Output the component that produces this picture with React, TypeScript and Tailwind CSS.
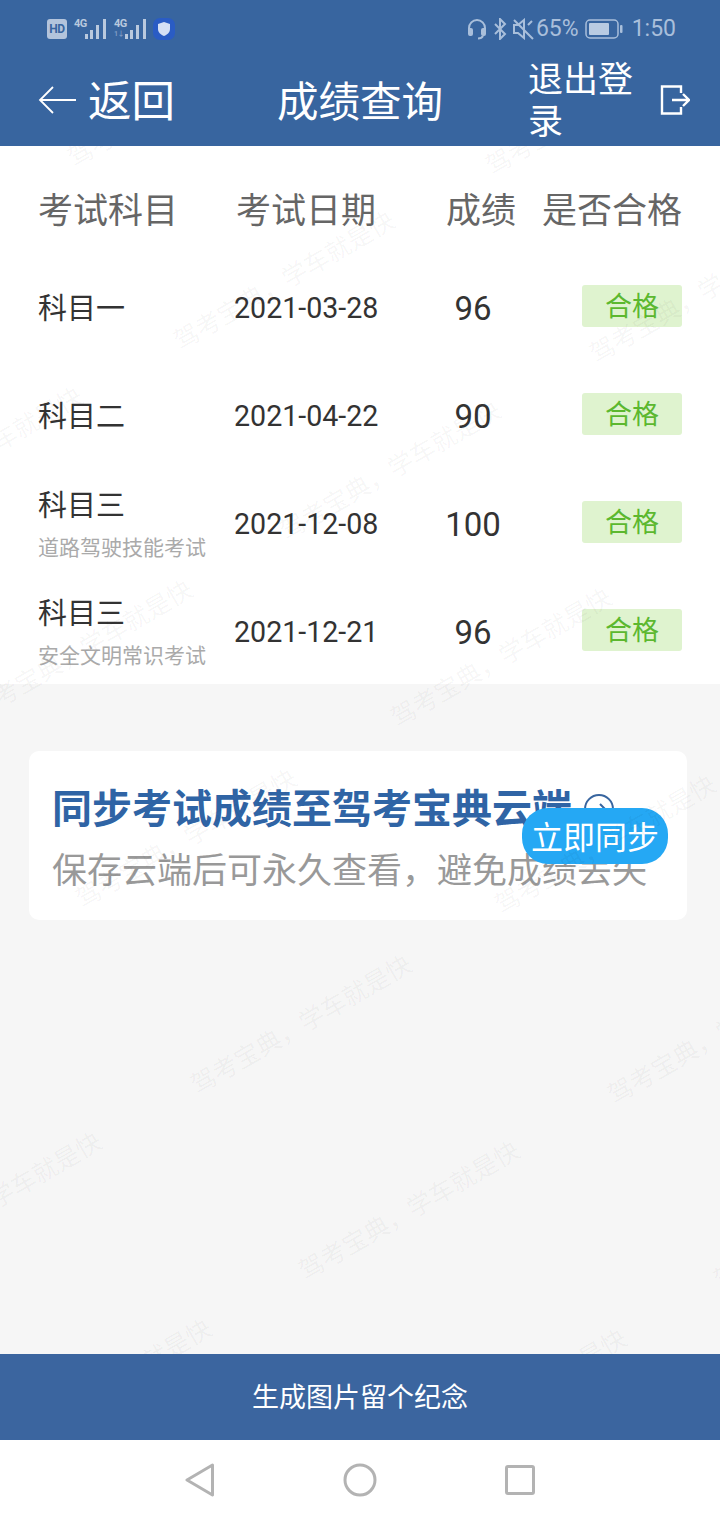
import React from "react";

const CJK = "font-['Roboto','Noto_Sans_CJK_SC',sans-serif]";

const rows = [
  { name: "科目一", date: "2021-03-28", score: "96" },
  { name: "科目二", date: "2021-04-22", score: "90" },
  { name: "科目三", sub: "道路驾驶技能考试", date: "2021-12-08", score: "100" },
  { name: "科目三", sub: "安全文明常识考试", date: "2021-12-21", score: "96" },
];

// start point of each watermark, in page coordinates
const marks = [
  [70, 160], [488, 168],
  [176, 343], [592, 356],
  [-136, 519], [282, 533],
  [-26, 712], [393, 720],
  [78, 901], [497, 907],
  [193, 1087], [610, 1097],
  [-117, 1264], [301, 1273], [716, 1282],
  [-7, 1451], [408, 1461],
];

function Signal() {
  return (
    <svg width="21" height="20" viewBox="0 0 21 20" fill="#b9c9de">
      <rect x="0" y="15" width="3" height="5" />
      <rect x="5" y="11" width="3" height="9" />
      <rect x="11" y="6" width="3" height="14" />
      <rect x="18" y="0" width="3" height="20" />
    </svg>
  );
}

function FourG({ sub }: { sub?: boolean }) {
  return (
    <span className="relative h-[20px] w-[11px] text-[11px] font-bold leading-[10px] tracking-[-0.5px] text-[#b9c9de]">
      4G
      {sub && <span className="absolute left-0 top-[12px] text-[7px] leading-none text-[#7f9cc4]">1↓</span>}
    </span>
  );
}

export default function App() {
  return (
    <div className={`relative flex h-[1520px] w-[720px] flex-col overflow-hidden bg-[#f6f6f6] ${CJK}`}>
      <header className="h-[146px] shrink-0 bg-[#38659f] text-white">
        <div className="flex h-[56px] items-center justify-between pl-[47px] pr-[44px] pt-[1px] text-[#a9bfdb]">
          <div className="flex items-center">
            <span className="flex h-[20px] w-[20px] items-center justify-center rounded-[3px] bg-[#b3c4dc] text-[12px] font-bold leading-none tracking-[-0.5px] text-[#38659f]">HD</span>
            <span className="ml-[7px] flex">
              <FourG />
              <Signal />
            </span>
            <span className="ml-[8px] flex">
              <FourG sub />
              <Signal />
            </span>
            <svg className="ml-[7px]" width="22" height="22" viewBox="0 0 22 22">
              <rect x="0" y="0" width="22" height="22" rx="7" fill="#2a5cc4" />
              <path d="M11 4l6 2v5c0 3.500-2.500 5.500-6 7-3.500-1.500-6-3.500-6-7V6z" fill="#d5e0f5" />
            </svg>
          </div>
          <div className="flex items-center">
            <svg width="20" height="22" viewBox="0 0 20 22" fill="none" stroke="#a9bfdb" strokeWidth="2">
              <path d="M2 13V10a8 8 0 0 1 16 0v3" />
              <rect x="2" y="11" width="3" height="6" rx="1" fill="#a9bfdb" />
              <rect x="15" y="11" width="3" height="6" rx="1" fill="#a9bfdb" />
              <path d="M16 18c-1 2-3 2.500-5 2.500" />
            </svg>
            <svg className="ml-[7px]" width="13" height="22" viewBox="0 0 13 22" fill="none" stroke="#a9bfdb" strokeWidth="2">
              <path d="M1 6l10 10-5 5V1l5 5L1 16" />
            </svg>
            <svg className="ml-[6px]" width="21" height="22" viewBox="0 0 21 22" fill="none" stroke="#a9bfdb" strokeWidth="2">
              <path d="M1 7h4l6-5v18l-6-5H1z M1 2l19 19 M15 7l4-4" />
            </svg>
            <span className="ml-[2px] text-[23px] leading-none">65%</span>
            <svg className="ml-[6px]" width="38" height="20" viewBox="0 0 38 20" fill="none">
              <rect x="1" y="1" width="32" height="18" rx="4" stroke="#a9bfdb" strokeWidth="1.500" />
              <rect x="4" y="4" width="20" height="12" rx="1" fill="#b9cbe2" />
              <rect x="35" y="6" width="2.500" height="8" rx="1" fill="#a9bfdb" />
            </svg>
            <span className="ml-[9px] text-[23px] leading-none">1:50</span>
          </div>
        </div>
        <div className="flex h-[90px] items-center pl-[38px] pt-[1px]">
          <svg width="39" height="30" viewBox="0 0 39 30" fill="none" stroke="white" strokeWidth="1.800" className="mb-[3px]">
            <path d="M38 15H2M15 2L2 15l13 13" />
          </svg>
          <span className="ml-[11px] mt-[2px] w-[189px] text-[43.500px] leading-none">返回</span>
          <span className="mt-[2px] w-[251px] text-[41.500px] leading-none">成绩查询</span>
          <span className="w-[132px] text-[35px] leading-[42px]">退出登录</span>
          <svg width="30" height="30" viewBox="0 0 30 30" fill="none" stroke="white" strokeWidth="2.400" className="mb-[4px]">
            <path d="M21 8V1.500H2v27h19V22M12 15h17M23 9l6 6-6 6" />
          </svg>
        </div>
      </header>

      <main className="relative flex min-h-0 flex-1 flex-col">
        <section className="h-[538px] overflow-hidden bg-white">
          <div className="flex h-[108px] items-center pl-[38px] pt-[22px] text-[35px] leading-none text-[#666666]">
            <span className="w-[198px]">考试科目</span>
            <span className="w-[210px]">考试日期</span>
            <span className="w-[96px]">成绩</span>
            <span>是否合格</span>
          </div>
          {rows.map((r, i) => (
            <div key={i} className="flex h-[108px] items-center pl-[38px]">
              <div className="w-[196px] pt-[2px]">
                <div className="text-[29px] leading-[32px] text-[#333333]">{r.name}</div>
                {r.sub && <div className="mt-[14px] text-[21px] leading-[24px] text-[#aaaaaa]">{r.sub}</div>}
              </div>
              <span className="w-[144px] whitespace-nowrap text-[28.600px] leading-none text-[#333333]">{r.date}</span>
              <span className="ml-[47px] w-[96px] text-center text-[33px] leading-none text-[#333333]">{r.score}</span>
              <span className="mb-[4px] ml-[61px] flex h-[42px] w-[100px] items-center justify-center rounded-[3px] bg-[#dff3cf] pt-[3px] text-[27px] leading-none text-[#5cb82f]">合格</span>
            </div>
          ))}
        </section>

        <section className="relative ml-[29px] mt-[67px] h-[169px] w-[658px] rounded-[10px] bg-white pl-[23px] pt-[34px]">
          <div className="flex items-center">
            <span className="whitespace-nowrap text-[40px] font-bold leading-[50px] text-[#2f64a5]">同步考试成绩至驾考宝典云端</span>
            <svg className="ml-[12px] mb-[2px]" width="30" height="30" viewBox="0 0 30 30" fill="none" stroke="#38659f" strokeWidth="2">
              <circle cx="15" cy="15" r="14" />
              <path d="M9 15h12M16 10l5 5-5 5" />
            </svg>
          </div>
          <div className="mt-[12px] whitespace-nowrap text-[35px] leading-[50px] text-[#999999]">保存云端后可永久查看，避免成绩丢失</div>
          <span className="absolute left-[493px] top-[57px] flex h-[56px] w-[146px] items-center justify-center rounded-[26px] bg-[#25a8f4] pt-[3px] text-[32px] leading-none text-white">立即同步</span>
        </section>

        <footer className="absolute bottom-[80px] left-0 flex h-[86px] w-full items-center justify-center bg-[#3b659f] pt-[3px] text-[27px] leading-none text-white">生成图片留个纪念</footer>
        <nav className="absolute bottom-0 left-0 flex h-[80px] w-full items-center justify-center bg-white">
          <svg width="30" height="34" viewBox="0 0 30 34" fill="none" stroke="#b3b3b3" strokeWidth="3" strokeLinejoin="round" className="absolute left-[185px] top-[23px]">
            <path d="M27.500 2L2 17l25.500 15z" />
          </svg>
          <svg width="34" height="34" viewBox="0 0 34 34" fill="none" stroke="#b3b3b3" strokeWidth="3" className="absolute left-[343px] top-[23px]">
            <circle cx="17" cy="17" r="15" />
          </svg>
          <svg width="30" height="30" viewBox="0 0 30 30" fill="none" stroke="#b3b3b3" strokeWidth="3" strokeLinejoin="round" className="absolute left-[505px] top-[25px]">
            <rect x="1.500" y="1.500" width="27" height="27" rx="1.500" />
          </svg>
        </nav>
      </main>

      <div className="pointer-events-none absolute inset-x-0 bottom-[166px] top-[146px] overflow-hidden">
        {marks.map(([x, y], i) => (
          <span
            key={i}
            className="absolute origin-[0_50%] -rotate-[30deg] whitespace-nowrap text-[25px] leading-none text-black/[0.045]"
            style={{ left: x, top: y - 146 - 12 }}
          >
            驾考宝典，学车就是快
          </span>
        ))}
      </div>
    </div>
  );
}
